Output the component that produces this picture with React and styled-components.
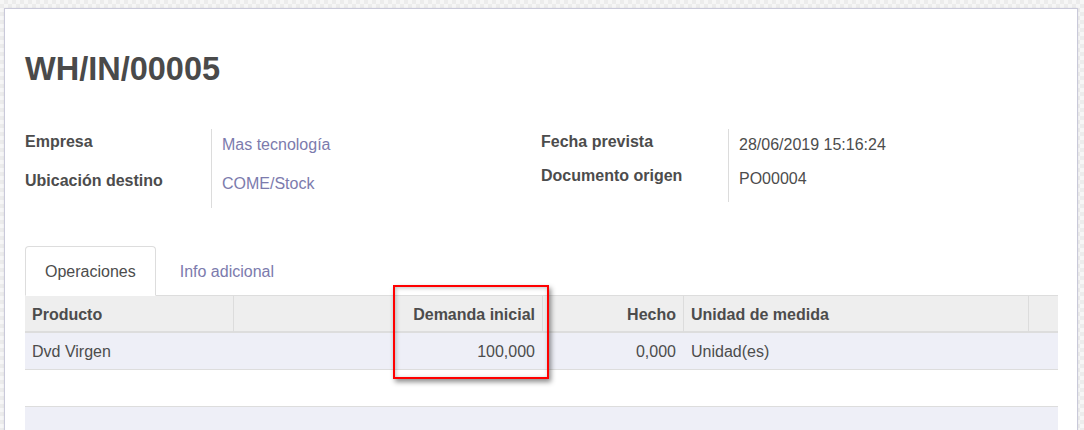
import React from "react";
import styled, { createGlobalStyle } from "styled-components";

const Global = createGlobalStyle`
  html, body { margin: 0; padding: 0; }
  body {
    font-family: "Liberation Sans", Arial, sans-serif;
    font-size: 16px;
    color: #4c4c4c;
    background-color: #f5f5f5;
    background-image: repeating-conic-gradient(#ececec 0 25%, #f6f6f6 0 50%);
    background-size: 8px 8px;
    overflow: hidden;
  }
`;

const Page = styled.div`
  height: 430px;
  padding: 8px 6px 0 4px;
  box-sizing: border-box;
  overflow: hidden;
`;

const Sheet = styled.div`
  background: #ffffff;
  border: 1px solid #c9c9da;
  box-shadow: 0 0 2px rgba(0, 0, 0, 0.08);
  padding: 41px 19px 0 20px;
  min-height: 500px;
`;

const Title = styled.h1`
  margin: 0 0 41px 0;
  font-size: 32.5px;
  line-height: 38px;
  font-weight: 700;
  color: #4a4a4a;
`;

const Groups = styled.div`
  display: grid;
  grid-template-columns: 516px 1fr;
`;

const Group = styled.div`
  display: grid;
  grid-template-columns: ${(p) => p.$labelWidth}px 1fr;
  align-content: start;
`;

const Label = styled.div`
  font-weight: 700;
  font-size: 16px;
  line-height: 24px;
  padding-top: 1px;
  height: ${(p) => p.$h - 1}px;
  color: #4c4c4c;
`;

const Value = styled.div`
  border-left: 1px solid #dcdcdc;
  padding: 4px 0 0 10px;
  line-height: 24px;
  height: ${(p) => p.$h - 4}px;
  color: ${(p) => (p.$link ? "#7c7bad" : "#4c4c4c")};
`;

const Notebook = styled.div`
  margin-top: 38px;
`;

const TabBar = styled.div`
  display: flex;
  border-bottom: 1px solid #dddddd;
`;

const Tab = styled.div`
  margin-bottom: -1px;
  margin-right: 4px;
  padding: 13px 19px 11px;
  line-height: 24px;
  border: 1px solid ${(p) => (p.$active ? "#dddddd" : "transparent")};
  border-bottom-color: ${(p) => (p.$active ? "#ffffff" : "transparent")};
  border-radius: 4px 4px 0 0;
  background: ${(p) => (p.$active ? "#ffffff" : "transparent")};
  color: ${(p) => (p.$active ? "#4c4c4c" : "#7c7bad")};
`;

const TableWrap = styled.div`
  position: relative;
`;

const cols = "208px 309px 141px 345px 1fr";

const HeadRow = styled.div`
  display: grid;
  grid-template-columns: ${cols};
  background: #eeeeee;
  border-bottom: 2px solid #dddddd;
  height: 35px;
`;

const Th = styled.div`
  font-weight: 700;
  line-height: 35px;
  padding: 1px 7px 0;
  text-align: ${(p) => (p.$num ? "right" : "left")};
  border-left: ${(p) => (p.$first ? "none" : "1px solid #dcdcdc")};
  white-space: nowrap;
`;

const BodyRow = styled.div`
  display: grid;
  grid-template-columns: ${cols};
  background: #eeeff7;
  border-bottom: 1px solid #dddddd;
  height: 36px;
`;

const Td = styled.div`
  line-height: 36px;
  padding: 1px 7px 0;
  text-align: ${(p) => (p.$num ? "right" : "left")};
  border-left: ${(p) => (p.$first ? "none" : "1px solid transparent")};
  white-space: nowrap;
`;

const Footer = styled.div`
  margin-top: 36px;
  border-top: 1px solid #dddddd;
  background: #eeeff7;
  height: 60px;
`;

const Highlight = styled.div`
  position: absolute;
  left: 368px;
  top: -11px;
  width: 156px;
  height: 94px;
  box-sizing: border-box;
  border: 2.5px solid #ff0000;
  box-shadow: 2px 3px 5px rgba(0, 0, 0, 0.45), inset 1px 1px 4px rgba(0, 0, 0, 0.25);
  pointer-events: none;
`;

export default function App() {
  return (
    <>
      <Global />
      <Page>
        <Sheet>
          <Title>WH/IN/00005</Title>
          <Groups>
            <Group $labelWidth={186}>
              <Label $h={39}>Empresa</Label>
              <Value $h={39} $link>Mas tecnología</Value>
              <Label $h={40}>Ubicación destino</Label>
              <Value $h={40} $link>COME/Stock</Value>
            </Group>
            <Group $labelWidth={187}>
              <Label $h={34}>Fecha prevista</Label>
              <Value $h={34}>28/06/2019 15:16:24</Value>
              <Label $h={39}>Documento origen</Label>
              <Value $h={39}>PO00004</Value>
            </Group>
          </Groups>
          <Notebook>
            <TabBar>
              <Tab $active>Operaciones</Tab>
              <Tab>Info adicional</Tab>
            </TabBar>
            <TableWrap>
              <HeadRow>
                <Th $first>Producto</Th>
                <Th $num>Demanda inicial</Th>
                <Th $num>Hecho</Th>
                <Th>Unidad de medida</Th>
                <Th></Th>
              </HeadRow>
              <BodyRow>
                <Td $first>Dvd Virgen</Td>
                <Td $num>100,000</Td>
                <Td $num>0,000</Td>
                <Td>Unidad(es)</Td>
                <Td></Td>
              </BodyRow>
              <Footer />
              <Highlight />
            </TableWrap>
          </Notebook>
        </Sheet>
      </Page>
    </>
  );
}
